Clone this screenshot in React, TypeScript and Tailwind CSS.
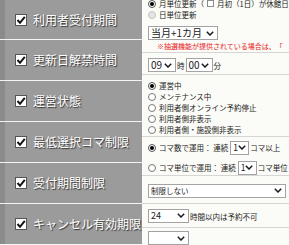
import React from "react";

const Chevron = () => (
  <svg width="8" height="5" viewBox="0 0 8 5" className="shrink-0">
    <polyline points="0.8,0.8 4,4 7.2,0.8" fill="none" stroke="#1a1a1a" strokeWidth="1.5" />
  </svg>
);

function Select({ w, text, fs = "text-[10px]" }: { w: string; text: string; fs?: string }) {
  return (
    <div
      className={`${w} ${fs} h-[14px] shrink-0 border border-[#a3a3a3] bg-white flex items-center justify-between pl-[2px] pr-[3px] text-[#222] leading-none`}
    >
      <span>{text}</span>
      <Chevron />
    </div>
  );
}

function Radio({ on, dim }: { on?: boolean; dim?: boolean }) {
  return (
    <span
      className={`w-[8px] h-[8px] shrink-0 rounded-full border flex items-center justify-center ${
        dim ? "border-[#c4c4c4] bg-[#e4e4e4]" : on ? "border-[#555] bg-white" : "border-[#7a7a7a] bg-white"
      }`}
    >
      {on && <span className="w-[4px] h-[4px] rounded-full bg-black" />}
    </span>
  );
}

function CheckBox() {
  return (
    <span className="w-[12px] h-[12px] shrink-0 bg-white border border-[#555] flex items-center justify-center">
      <svg width="10" height="10" viewBox="0 0 10 10">
        <polyline points="1.5,5 4,7.8 8.8,1.8" fill="none" stroke="#111" strokeWidth="2" />
      </svg>
    </span>
  );
}

function Label({ text, h }: { text: string; h: string }) {
  return (
    <div className={`${h} box-border flex items-center bg-[#9b9b9b] border-b border-[#f4f4f4]`}>
      <div className="w-[5px] self-stretch bg-[#8b8b8b]" />
      <div className="ml-[10px]">
        <CheckBox />
      </div>
      <span className="ml-[6px] text-[12px] leading-none text-white whitespace-nowrap [text-shadow:1px_1px_1px_#333]">
        {text}
      </span>
    </div>
  );
}

export default function App() {
  return (
    <div
      className="w-[289px] h-[245px] overflow-hidden flex bg-[#fbfbf7] [text-spacing-trim:space-all]"
      style={{ fontFamily: '"Noto Sans CJK JP", "Noto Sans", sans-serif' }}
    >
      <div className="w-[142px] shrink-0 flex flex-col bg-[#9b9b9b]">
        <Label text="利用者受付期間" h="h-[40px]" />
        <Label text="更新日解禁時間" h="h-[41px]" />
        <Label text="運営状態" h="h-[41px]" />
        <Label text="最低選択コマ制限" h="h-[41px]" />
        <Label text="受付期間制限" h="h-[41px]" />
        <Label text="キャンセル有効期限" h="h-[41px]" />
      </div>
      <div className="flex-1 min-w-0 flex flex-col text-[7.5px] text-[#222] leading-none whitespace-nowrap">
        {/* Row A */}
        <div className="h-[54px] box-border border-b border-[#d6d6d6] pl-[6px] flex flex-col">
          <div className="h-[11px] mt-[-2px] flex items-center gap-[3px]">
            <Radio on />
            <span>月単位更新（</span>
            <span className="w-[7px] h-[7px] border border-[#8a8a8a] bg-white shrink-0" />
            <span>月初（1日）が休館日</span>
          </div>
          <div className="h-[12px] flex items-center gap-[3px]">
            <Radio dim />
            <span>日単位更新</span>
          </div>
          <div className="mt-[5px]">
            <Select w="w-[70px]" text="当月+1カ月" />
          </div>
          <div className="h-[11px] mt-[1px] ml-[9px] flex items-center text-[7px] text-[#e8201c]">
            ※抽選機能が提供されている場合は、「
          </div>
        </div>
        {/* Row B */}
        <div className="h-[24px] box-border border-b border-[#d6d6d6] pl-[6px] pt-[5px] flex items-start">
          <Select w="w-[28px]" text="09" />
          <span className="mt-[4px] mx-[1px]">時</span>
          <Select w="w-[27px]" text="00" />
          <span className="mt-[4px] ml-[1px]">分</span>
        </div>
        {/* Row C */}
        <div className="h-[64px] box-border border-b border-[#d6d6d6] pl-[6px] pt-[6px] flex flex-col">
          {["運営中", "メンテナンス中", "利用者側オンライン予約停止", "利用者側非表示", "利用者側・施設側非表示"].map(
            (t, i) => (
              <div key={t} className="h-[11px] flex items-center gap-[3px]">
                <Radio on={i === 0} />
                <span>{t}</span>
              </div>
            )
          )}
        </div>
        {/* Row D */}
        <div className="h-[41px] box-border border-b border-[#d6d6d6] pl-[6px] pt-[4px] flex flex-col gap-[6px]">
          <div className="h-[14px] flex items-center">
            <Radio on />
            <span className="ml-[3px]">コマ数で運用：&nbsp;連続</span>
            <span className="ml-[2px]">
              <Select w="w-[19px]" text="1" fs="text-[8.5px]" />
            </span>
            <span className="ml-[1px]">コマ以上</span>
          </div>
          <div className="h-[14px] flex items-center">
            <Radio />
            <span className="ml-[3px]">コマ単位で運用：&nbsp;連続</span>
            <span className="ml-[2px]">
              <Select w="w-[19px]" text="1" fs="text-[8.5px]" />
            </span>
            <span className="ml-[1px]">コマ単位</span>
          </div>
        </div>
        {/* Row E */}
        <div className="h-[31px] box-border border-b border-[#d6d6d6] pl-[6px] pt-[8px]">
          <Select w="w-[138px]" text="制限しない" fs="text-[7.5px]" />
        </div>
        {/* Row F */}
        <div className="h-[27px] box-border border-b border-[#d6d6d6] pl-[6px] pt-[5px] flex items-start">
          <Select w="w-[41px]" text="24" fs="text-[9px]" />
          <span className="mt-[4px] ml-[1px]">時間以内は予約不可</span>
        </div>
        {/* Row G */}
        <div className="pl-[6px] pt-[3px]">
          <Select w="w-[41px]" text="" />
        </div>
      </div>
    </div>
  );
}
